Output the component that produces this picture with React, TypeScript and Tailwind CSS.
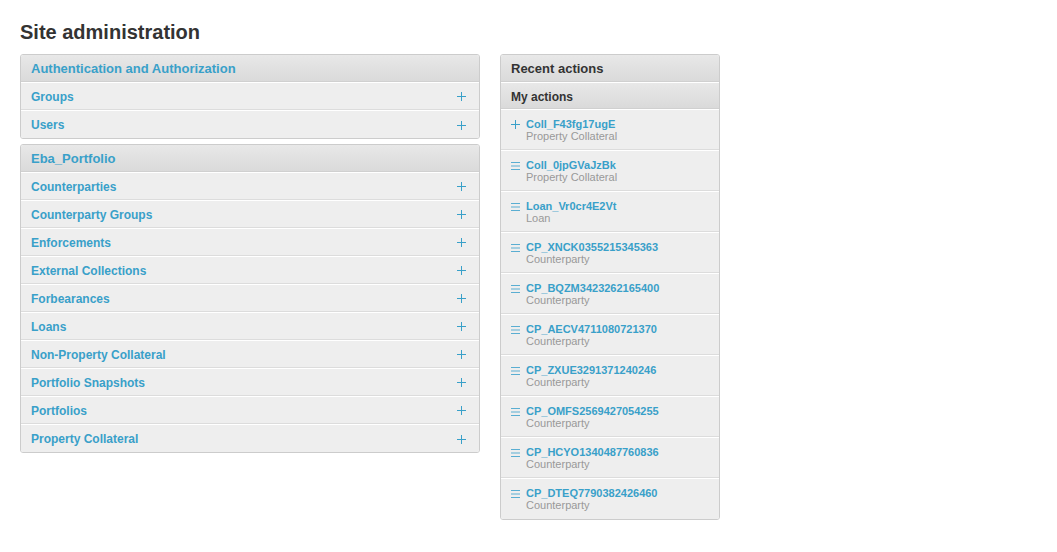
import React from 'react';

const font = { fontFamily: '"Liberation Sans", Arial, sans-serif' };

const PlusIcon = () => (
  <svg width="9" height="9" viewBox="0 0 9 9" className="text-[#39a0c9]">
    <path d="M4.5 0v9M0 4.5h9" stroke="currentColor" strokeWidth="1" />
  </svg>
);

const ListIcon = () => (
  <svg width="9" height="8" viewBox="0 0 9 8" className="text-[#5aaed2]">
    <path d="M0 0.5h9M0 4h9M0 7.5h9" stroke="currentColor" strokeWidth="1" />
  </svg>
);

const ModulePanel = ({ title, models }: { title: string; models: string[] }) => (
  <div className="w-[460px] border border-[#cccccc] rounded-[3px] overflow-hidden">
    <div className="h-[27px] flex items-center px-[10px] pt-[2px] bg-gradient-to-b from-[#e8e8e8] to-[#dadada] border-b border-[#d0d0d0]">
      <span className="text-[13px] font-bold text-[#39a0c9]">{title}</span>
    </div>
    {models.map((m, i) => (
      <div
        key={m}
        className={`h-[28px] flex items-center justify-between pl-[10px] pr-[13px] pt-[1px] bg-[#eeeeee] border-t border-white ${
          i < models.length - 1 ? 'border-b border-b-[#dcdcdc]' : ''
        }`}
      >
        <span className="text-[12px] font-bold text-[#39a0c9]">{m}</span>
        <PlusIcon />
      </div>
    ))}
  </div>
);

export default function App() {
  const auth = ['Groups', 'Users'];
  const eba = [
    'Counterparties',
    'Counterparty Groups',
    'Enforcements',
    'External Collections',
    'Forbearances',
    'Loans',
    'Non-Property Collateral',
    'Portfolio Snapshots',
    'Portfolios',
    'Property Collateral',
  ];
  const actions = [
    { name: 'Coll_F43fg17ugE', type: 'Property Collateral', add: true },
    { name: 'Coll_0jpGVaJzBk', type: 'Property Collateral' },
    { name: 'Loan_Vr0cr4E2Vt', type: 'Loan' },
    { name: 'CP_XNCK0355215345363', type: 'Counterparty' },
    { name: 'CP_BQZM3423262165400', type: 'Counterparty' },
    { name: 'CP_AECV4711080721370', type: 'Counterparty' },
    { name: 'CP_ZXUE3291371240246', type: 'Counterparty' },
    { name: 'CP_OMFS2569427054255', type: 'Counterparty' },
    { name: 'CP_HCYO1340487760836', type: 'Counterparty' },
    { name: 'CP_DTEQ7790382426460', type: 'Counterparty' },
  ];

  return (
    <div className="min-h-[552px] bg-white px-[20px] pt-[20px]" style={font}>
      <h1 className="text-[20px] font-bold text-[#333333] leading-[24px] mb-[10px]">Site administration</h1>
      <div className="flex gap-[20px] items-start">
        <div className="flex flex-col gap-[5px]">
          <ModulePanel title="Authentication and Authorization" models={auth} />
          <ModulePanel title="Eba_Portfolio" models={eba} />
        </div>
        <div className="w-[220px] border border-[#cccccc] rounded-[3px] overflow-hidden">
          <div className="h-[27px] flex items-center px-[10px] pt-[2px] bg-gradient-to-b from-[#e8e8e8] to-[#dadada] border-b border-[#d0d0d0]">
            <span className="text-[13px] font-bold text-[#333333]">Recent actions</span>
          </div>
          <div className="h-[27px] flex items-center px-[10px] pt-[2px] bg-gradient-to-b from-[#e8e8e8] to-[#dadada] border-t border-white border-b border-b-[#d0d0d0]">
            <span className="text-[12px] font-bold text-[#333333]">My actions</span>
          </div>
          {actions.map((a, i) => (
            <div
              key={a.name}
              className={`h-[41px] flex items-start gap-[6px] pl-[10px] pt-[8px] bg-[#eeeeee] border-t border-white ${
                i < actions.length - 1 ? 'border-b border-b-[#dcdcdc]' : ''
              }`}
            >
              <div className="w-[9px] h-[13px] flex items-center justify-center">
                {a.add ? <PlusIcon /> : <ListIcon />}
              </div>
              <div className="flex flex-col">
                <span className="text-[11px] font-bold text-[#39a0c9] leading-[13px]">{a.name}</span>
                <span className="text-[11px] text-[#999999] leading-[11px]">{a.type}</span>
              </div>
            </div>
          ))}
        </div>
      </div>
    </div>
  );
}
